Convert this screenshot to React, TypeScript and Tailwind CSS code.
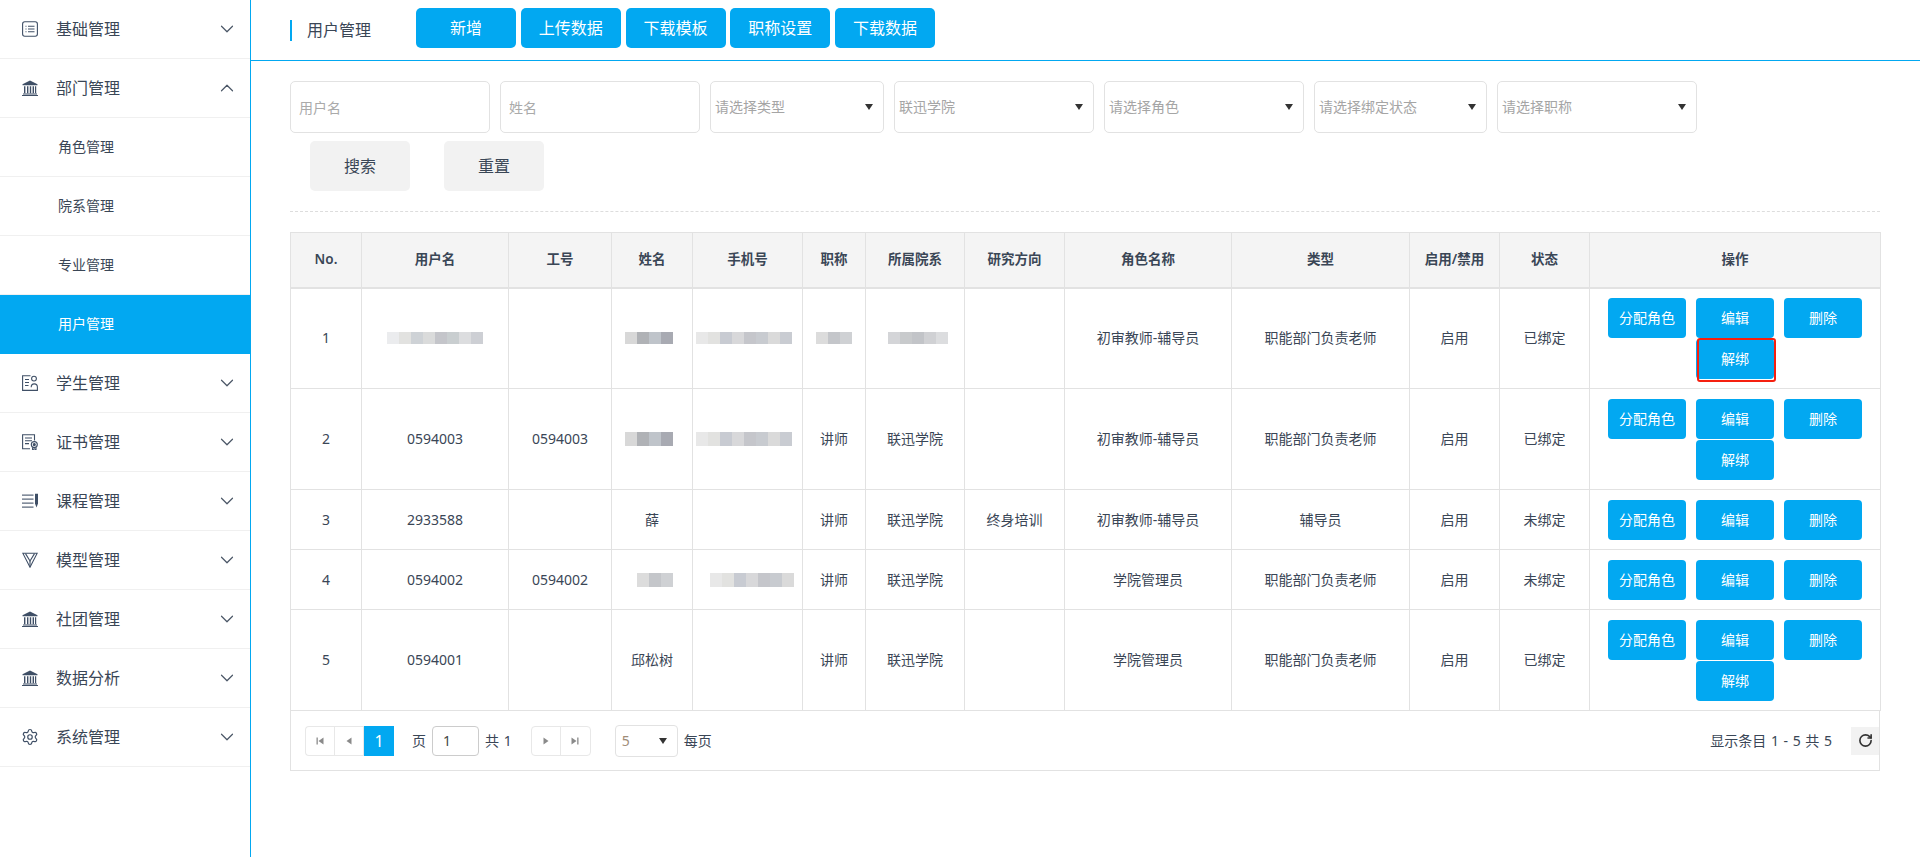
import { ChevronDown, ChevronUp, RotateCw, Settings } from 'lucide-react';
import type { ReactNode } from 'react';

const blue = 'bg-[#02a8f1]';

// sidebar icons, drawn on a 16 box
const IconList = () => (
  <svg viewBox="0 0 16 16" className="w-4 h-4 text-[#3f4f66]" fill="none" stroke="currentColor" strokeWidth="1.1">
    <rect x="0.6" y="0.8" width="14.8" height="14.4" rx="2.2" />
    <path d="M6 5.2h6.5M6 8h6.5M6 10.8h6.5M3.5 5.2h1M3.5 8h1M3.5 10.8h1" />
  </svg>
);
const IconBank = () => (
  <svg viewBox="0 0 16 16" className="w-4 h-4 text-[#3f4f66]" fill="currentColor">
    <path d="M8 0.5 15.5 4.2V5.2H0.5V4.2Z" />
    <path d="M2 6.2h1.4v7H2zM5 6.2h1.4v7H5zM7.8 6.2h1.4v7H7.8zM10.6 6.2H12v7h-1.4zM13 6.2h1.2v7H13z" />
    <path d="M1 13.6h14v0.9H1zM0 15h16v1H0z" />
  </svg>
);
const IconStudent = () => (
  <svg viewBox="0 0 16 16" className="w-4 h-4 text-[#3f4f66]" fill="none" stroke="currentColor" strokeWidth="1.1">
    <path d="M8.5 0.8H0.6v14.6h14.8v-3.2c0-2-1.2-3.3-3.1-3.3s-3.1 1.3-3.1 3.3" />
    <circle cx="12" cy="3.6" r="2.4" />
    <path d="M3 4.5h4M3 7.5h4M3 10.5h3.5" />
  </svg>
);
const IconCert = () => (
  <svg viewBox="0 0 16 16" className="w-4 h-4 text-[#3f4f66]" fill="none" stroke="currentColor" strokeWidth="1.1">
    <path d="M12.5 6.5V0.8H0.6v14h7.4" />
    <path d="M3 4h7M3 6.8h7M3 9.6h4" />
    <circle cx="12.3" cy="10.6" r="3" />
    <circle cx="12.3" cy="10.6" r="1" fill="currentColor" />
    <path d="M10.6 13.2v2.6l1.7-1 1.7 1v-2.6" />
  </svg>
);
const IconCourse = () => (
  <svg viewBox="0 0 16 16" className="w-4 h-4 text-[#3f4f66]" fill="currentColor">
    <path d="M0 1.5h11.5v1.3H0zM0 5.5h11.5v1.3H0zM0 9.5h11.5v1.3H0zM0 13.5h11.5v1.3H0z" opacity="0.85" />
    <path d="M13 0.8h3v9.7l-1.5 4-1.5-4z" />
  </svg>
);
const IconModel = () => (
  <svg viewBox="0 0 16 16" className="w-4 h-4 text-[#3f4f66]" fill="none" stroke="currentColor" strokeWidth="1.1">
    <path d="M0.8 1.2h14.4L8 15.2Z" />
    <path d="M3.5 1.6 8 9l4.5-7.4" />
    <path d="M8 9v5.5" />
  </svg>
);
const IconGear = () => <Settings className="w-[18px] h-[18px] -m-px shrink-0 text-[#3f4f66]" strokeWidth={1.6} />;

const menu: { name: string; icon?: ReactNode; open?: boolean; sub?: boolean; active?: boolean }[] = [
  { name: '基础管理', icon: <IconList /> },
  { name: '部门管理', icon: <IconBank />, open: true },
  { name: '角色管理', sub: true },
  { name: '院系管理', sub: true },
  { name: '专业管理', sub: true },
  { name: '用户管理', sub: true, active: true },
  { name: '学生管理', icon: <IconStudent /> },
  { name: '证书管理', icon: <IconCert /> },
  { name: '课程管理', icon: <IconCourse /> },
  { name: '模型管理', icon: <IconModel /> },
  { name: '社团管理', icon: <IconBank /> },
  { name: '数据分析', icon: <IconBank /> },
  { name: '系统管理', icon: <IconGear /> },
];

const Sidebar = () => (
  <aside className="w-[251px] shrink-0 h-full border-r border-[#02a8f1] bg-white">
    {menu.map((item) =>
      item.sub ? (
        <div
          key={item.name}
          className={
            item.active
              ? 'h-[59px] flex items-center pb-px pl-[58px] text-sm text-white bg-[#02a8f1]'
              : 'h-[59px] flex items-center pl-[58px] text-sm text-[#3a4656] border-b border-[#f0f0f0]'
          }
        >
          {item.name}
        </div>
      ) : (
        <div key={item.name} className="h-[59px] flex items-center pl-[22px] pr-[12px] text-base text-[#3a4656] border-b border-[#f0f0f0]">
          <span className="w-4 h-4 flex">{item.icon}</span>
          <span className="ml-[18px] flex-1">{item.name}</span>
          {item.open ? (
            <ChevronUp className="w-[22px] h-[22px] text-[#4a5666]" strokeWidth={1.3} />
          ) : (
            <ChevronDown className="w-[22px] h-[22px] text-[#4a5666]" strokeWidth={1.3} />
          )}
        </div>
      ),
    )}
  </aside>
);

const Caret = () => <span className="w-0 h-0 border-x-[4px] border-x-transparent border-t-[6px] border-t-[#333]" />;

const TextBox = ({ hint }: { hint: string }) => (
  <input
    readOnly
    placeholder={hint}
    className="w-[200px] h-[52px] px-2 border border-[#e2e2e2] rounded-[5px] text-sm outline-none placeholder:text-[#aaaaaa]"
  />
);

const SelectBox = ({ hint, width }: { hint: string; width: string }) => (
  <div className={`${width} h-[52px] pl-[4px] pr-[10px] flex items-center justify-between border border-[#e2e2e2] rounded-[5px] text-sm text-[#a5a5a5]`}>
    <span>{hint}</span>
    <Caret />
  </div>
);

// pixelated block standing in for the blurred personal data
const Mosaic = ({ cells, size = 'h-3', shift = '' }: { cells: string[]; size?: string; shift?: string }) => (
  <div className={`flex justify-center ${size} ${shift}`}>
    {cells.map((c, i) => (
      <span key={i} className={`w-3 h-full ${c}`} />
    ))}
  </div>
);

const grayA = ['bg-[#ebecee]', 'bg-[#e2e2e0]', 'bg-[#ced2d6]', 'bg-[#dadbdb]', 'bg-[#c4c5ca]', 'bg-[#c9ced0]', 'bg-[#dcdddf]', 'bg-[#cdcfd4]'];
const grayB = ['bg-[#d8d8d8]', 'bg-[#b0b2b6]', 'bg-[#bfc4ca]', 'bg-[#a8aab2]'];
const grayC = ['bg-[#e8e8e8]', 'bg-[#e2e2e0]', 'bg-[#c8cbd2]', 'bg-[#d8d8da]', 'bg-[#c5c6cb]', 'bg-[#c8cbd0]', 'bg-[#dadada]', 'bg-[#c9ccd2]'];
const grayD = ['bg-[#dcdcdc]', 'bg-[#c4c6ca]', 'bg-[#cfd1d4]'];
const grayE = ['bg-[#d4d5d8]', 'bg-[#c8cacc]', 'bg-[#c2c4c8]', 'bg-[#d0d1d4]', 'bg-[#dcdddf]'];

type Row = {
  no: number;
  user: ReactNode;
  job?: string;
  name: ReactNode;
  phone?: ReactNode;
  title: ReactNode;
  dept: ReactNode;
  field?: string;
  role: string;
  kind: string;
  bound: string;
  unbind?: boolean;
  height: string;
};

const rows: Row[] = [
  {
    no: 1,
    user: <Mosaic cells={grayA} />,
    name: <Mosaic cells={grayB} shift="pr-[6px]" />,
    phone: <Mosaic cells={grayC} shift="pr-[8px]" />,
    title: <Mosaic cells={grayD} />,
    dept: <Mosaic cells={grayE} shift="pl-[6px]" />,
    role: '初审教师-辅导员',
    kind: '职能部门负责老师',
    bound: '已绑定',
    unbind: true,
    height: 'h-[101px]',
  },
  {
    no: 2,
    user: '0594003',
    job: '0594003',
    name: <Mosaic cells={grayB} size="h-[14px]" shift="pr-[6px]" />,
    phone: <Mosaic cells={grayC} size="h-[14px]" shift="pr-[8px]" />,
    title: '讲师',
    dept: '联迅学院',
    role: '初审教师-辅导员',
    kind: '职能部门负责老师',
    bound: '已绑定',
    unbind: true,
    height: 'h-[101px]',
  },
  {
    no: 3,
    user: '2933588',
    name: '薛',
    title: '讲师',
    dept: '联迅学院',
    field: '终身培训',
    role: '初审教师-辅导员',
    kind: '辅导员',
    bound: '未绑定',
    height: 'h-[60px]',
  },
  {
    no: 4,
    user: '0594002',
    job: '0594002',
    name: <Mosaic cells={grayD} size="h-[14px]" shift="pl-[6px]" />,
    phone: <Mosaic cells={grayC.slice(0, 7)} size="h-[14px]" shift="pl-[8px]" />,
    title: '讲师',
    dept: '联迅学院',
    role: '学院管理员',
    kind: '职能部门负责老师',
    bound: '未绑定',
    height: 'h-[60px]',
  },
  {
    no: 5,
    user: '0594001',
    name: '邱松树',
    title: '讲师',
    dept: '联迅学院',
    role: '学院管理员',
    kind: '职能部门负责老师',
    bound: '已绑定',
    unbind: true,
    height: 'h-[101px]',
  },
];

const heads = ['No.', '用户名', '工号', '姓名', '手机号', '职称', '所属院系', '研究方向', '角色名称', '类型', '启用/禁用', '状态', '操作'];
const cols = ['w-[71px]', 'w-[147px]', 'w-[103px]', 'w-[81px]', 'w-[110px]', 'w-[63px]', 'w-[99px]', 'w-[100px]', 'w-[167px]', 'w-[178px]', 'w-[90px]', 'w-[90px]', 'w-[291px]'];

const ActionBtn = ({ label, mark }: { label: string; mark?: boolean }) => (
  <button className={`relative w-[78px] h-10 rounded-[4px] ${blue} text-white text-sm`}>
    {label}
    {mark && <span className="absolute left-[1px] top-[-1px] w-[79px] h-[44px] border-2 border-[#f5200f] rounded-[3px]" />}
  </button>
);

const td = 'border border-[#e2e2e2] text-center align-middle p-0';

const UserTable = () => (
  <table className="w-full table-fixed border-collapse text-sm text-[#3a4656]">
    <colgroup>
      {cols.map((c, i) => (
        <col key={i} className={c} />
      ))}
    </colgroup>
    <thead>
      <tr className="h-[55px] bg-[#f4f4f4]">
        {heads.map((h) => (
          <th key={h} className="border border-b-2 border-[#e2e2e2] font-semibold text-[13.5px] text-[#3a4656] p-0">
            {h}
          </th>
        ))}
      </tr>
    </thead>
    <tbody>
      {rows.map((r) => (
        <tr key={r.no} className={r.height}>
          <td className={td}>{r.no}</td>
          <td className={td}>{r.user}</td>
          <td className={td}>{r.job}</td>
          <td className={td}>{r.name}</td>
          <td className={td}>{r.phone}</td>
          <td className={td}>{r.title}</td>
          <td className={td}>{r.dept}</td>
          <td className={td}>{r.field}</td>
          <td className={td}>{r.role}</td>
          <td className={td}>{r.kind}</td>
          <td className={td}>启用</td>
          <td className={td}>{r.bound}</td>
          <td className={td}>
            <div className="flex flex-wrap justify-center gap-x-[10px] gap-y-[1px] px-[18px]">
              <ActionBtn label="分配角色" />
              <ActionBtn label="编辑" />
              <ActionBtn label="删除" />
              {r.unbind && <ActionBtn label="解绑" mark={r.no === 1} />}
            </div>
          </td>
        </tr>
      ))}
    </tbody>
  </table>
);

const PageArrow = ({ d }: { d: string }) => (
  <span className="w-[29px] h-full flex items-center justify-center border-r border-[#e8e8e8] last:border-r-0">
    <svg viewBox="0 0 10 10" className="w-2.5 h-2.5 text-[#8a8a8a]" fill="currentColor">
      <path d={d} />
    </svg>
  </span>
);

const Pager = () => (
  <div className="h-[60px] border-x border-b border-[#e2e2e2] flex items-center pl-[14px] pr-0 text-sm text-[#3a4656]">
    <div className="h-[30px] flex border border-[#e8e8e8] border-r-0 rounded-l-[4px]">
      <PageArrow d="M1.5 1.5h1.3v7H1.5zM8.5 1.5v7L3.5 5z" />
      <PageArrow d="M7.5 1.5v7L2.5 5z" />
      <span className={`w-[30px] -my-px flex items-center justify-center text-white text-base ${blue}`}>1</span>
    </div>
    <span className="ml-[18px]">页</span>
    <span className="ml-[6px] w-[47px] h-[30px] pl-[10px] flex items-center border border-[#cccccc] rounded-[4px] text-[#444]">1</span>
    <span className="ml-[6px] [word-spacing:1px]">共 1</span>
    <div className="ml-[19px] h-[30px] flex border border-[#e8e8e8] rounded-[4px]">
      <PageArrow d="M2.5 1.5v7L7.5 5z" />
      <PageArrow d="M1.5 1.5v7L6.5 5zM7.2 1.5h1.3v7H7.2z" />
    </div>
    <div className="ml-[24px] w-[63px] h-8 pl-[6px] pr-[10px] flex items-center justify-between border border-[#e2e2e2] rounded-[4px] text-[#a08c78]">
      <span>5</span>
      <Caret />
    </div>
    <span className="ml-[6px]">每页</span>
    <span className="ml-auto [word-spacing:1px]">显示条目 1 - 5 共 5</span>
    <span className="ml-[19px] w-7 h-7 flex items-center justify-center bg-[#f2f2f2]">
      <RotateCw className="w-[15px] h-[15px] text-[#333]" strokeWidth={2.6} />
    </span>
  </div>
);

export default function App() {
  return (
    <div
      className="flex h-screen w-full overflow-hidden bg-white"
      style={{ fontFamily: '"Noto Sans", "Noto Sans CJK SC", sans-serif' }}
    >
      <Sidebar />
      <main className="flex-1 min-w-0">
        {/* Header */}
        <header className="h-[61px] pl-[39px] flex items-center border-b border-[#02a8f1]">
          <div className="h-[21px] border-l-2 border-[#02a8f1] pl-[15px] w-[81px] text-base leading-[21px] text-[#3a4656] shrink-0">
            用户管理
          </div>
          <div className="ml-[45px] flex gap-[4.75px] -mt-[4px]">
            {['新增', '上传数据', '下载模板', '职称设置', '下载数据'].map((b) => (
              <button key={b} className={`w-[100px] h-10 rounded-[5px] ${blue} text-white text-base`}>
                {b}
              </button>
            ))}
          </div>
        </header>

        <div className="pl-[39px] pr-[40px] pt-5">
          {/* Filters */}
          <div className="flex gap-[10px]">
            <TextBox hint="用户名" />
            <TextBox hint="姓名" />
            <SelectBox hint="请选择类型" width="w-[174px]" />
            <SelectBox hint="联迅学院" width="w-[200px]" />
            <SelectBox hint="请选择角色" width="w-[200px]" />
            <SelectBox hint="请选择绑定状态" width="w-[173px]" />
            <SelectBox hint="请选择职称" width="w-[200px]" />
          </div>
          <div className="mt-2 ml-5 flex gap-[34px]">
            <button className="w-[100px] h-[50px] rounded-[5px] bg-[#f2f2f2] text-base text-[#3a4656]">搜索</button>
            <button className="w-[100px] h-[50px] rounded-[5px] bg-[#f2f2f2] text-base text-[#3a4656]">重置</button>
          </div>
          <div className="mt-5 border-t border-dashed border-[#dddddd]" />

          <div className="mt-5">
            <UserTable />
            <Pager />
          </div>
        </div>
      </main>
    </div>
  );
}
